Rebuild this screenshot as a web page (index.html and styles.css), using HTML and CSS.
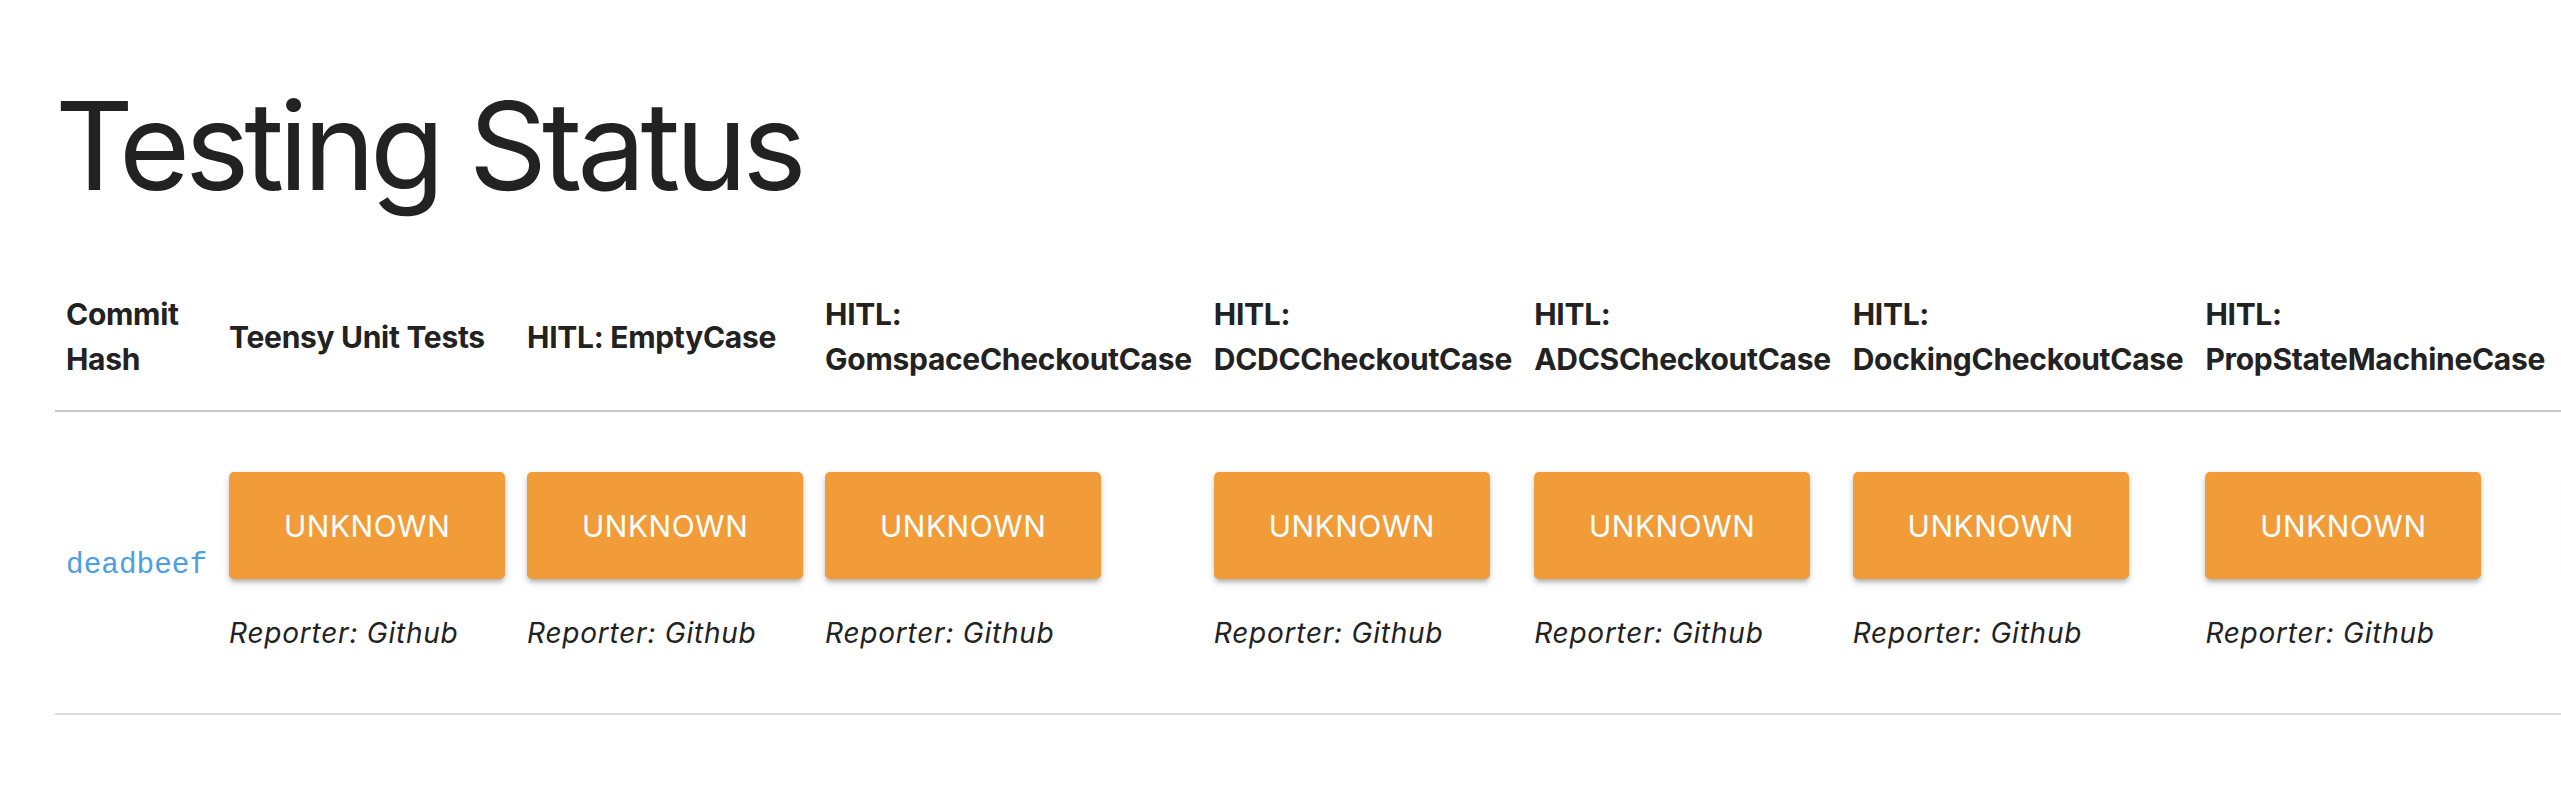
FILE: index.html
```html
<!DOCTYPE html>
<html lang="en">
<head>
<meta charset="utf-8">
<title>Testing Status</title>
<link rel="stylesheet" href="styles.css">
</head>
<body>
<main class="page">
  <h1 class="title">Testing Status</h1>
  <table class="status">
    <thead>
      <tr>
        <th>Commit Hash</th>
        <th>Teensy Unit Tests</th>
        <th>HITL: EmptyCase</th>
        <th>HITL: GomspaceCheckoutCase</th>
        <th>HITL: DCDCCheckoutCase</th>
        <th>HITL: ADCSCheckoutCase</th>
        <th>HITL: DockingCheckoutCase</th>
        <th>HITL: PropStateMachineCase</th>
        <th>HITL: DeploymentCase</th>
      </tr>
    </thead>
    <tbody>
      <tr>
        <td class="hash"><a href="#">deadbeef</a></td>
        <td><div class="badge">UNKNOWN</div><p class="reporter">Reporter: Github</p></td>
        <td><div class="badge">UNKNOWN</div><p class="reporter">Reporter: Github</p></td>
        <td><div class="badge">UNKNOWN</div><p class="reporter">Reporter: Github</p></td>
        <td><div class="badge">UNKNOWN</div><p class="reporter">Reporter: Github</p></td>
        <td><div class="badge">UNKNOWN</div><p class="reporter">Reporter: Github</p></td>
        <td><div class="badge">UNKNOWN</div><p class="reporter">Reporter: Github</p></td>
        <td><div class="badge">UNKNOWN</div><p class="reporter">Reporter: Github</p></td>
        <td><div class="badge">UNKNOWN</div><p class="reporter">Reporter: Github</p></td>
      </tr>
    </tbody>
  </table>
</main>
</body>
</html>
```
FILE: styles.css
```css
html, body {
  margin: 0;
  background: #ffffff;
  overflow: hidden;
}

body {
  font-family: Inter, "Noto Sans", sans-serif;
  color: #212529;
}

.page {
  padding: 0 0 0 55px;
}

.title {
  font-size: 122px;
  font-weight: 400;
  line-height: 146px;
  margin: 73px 0 45px 0;
  letter-spacing: -5.2px;
  color: #222222;
}

.status {
  border-collapse: collapse;
  width: 1px;
}

.status th {
  font-size: 30px;
  font-weight: 700;
  line-height: 45px;
  letter-spacing: -0.3px;
  text-align: left;
  vertical-align: middle;
  padding: 28px 11px;
  border-bottom: 2px solid #c8c8c8;
  color: #222222;
}

.status td {
  padding: 60px 11px 59px;
  vertical-align: middle;
  border-bottom: 2px solid #dcdcdc;
}

.status td.hash {
  padding-top: 66px;
}

.hash a {
  font-family: "Liberation Mono", "Courier New", monospace;
  font-size: 29.4px;
  line-height: 44px;
  color: #4aa0e2;
  text-decoration: none;
}

.badge {
  box-sizing: border-box;
  width: 276px;
  height: 107px;
  display: flex;
  align-items: center;
  justify-content: center;
  background: #f19c39;
  color: #ffffff;
  border-radius: 5px;
  font-size: 30px;
  font-weight: 400;
  letter-spacing: 0.5px;
  box-shadow: 0 4px 4px -2px rgba(0, 0, 0, 0.2), 0 4px 6px rgba(0, 0, 0, 0.12), 0 2px 10px rgba(0, 0, 0, 0.08);
  margin-bottom: 33px;
}

.reporter {
  margin: 0;
  font-size: 28px;
  line-height: 42px;
  font-style: italic;
  letter-spacing: 0.75px;
  white-space: nowrap;
  color: #222222;
}
```
